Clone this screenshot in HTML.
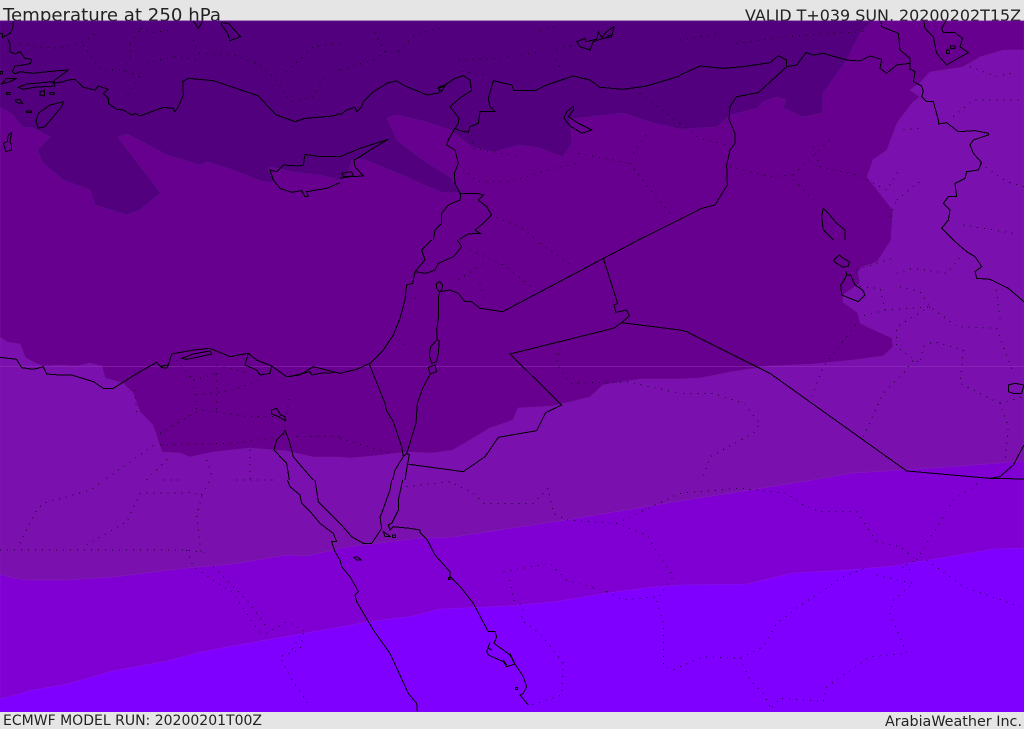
<!DOCTYPE html>
<html>
<head>
<meta charset="utf-8">
<title>Temperature at 250 hPa</title>
<style>
html,body{margin:0;padding:0;width:1024px;height:729px;overflow:hidden;background:#e5e5e5}
svg{display:block;position:absolute;left:0;top:0}
text{font-family:"DejaVu Sans",sans-serif;fill:#222}
.c path{fill:none;stroke:#000;stroke-width:1;vector-effect:non-scaling-stroke;shape-rendering:crispEdges}
.d path{fill:none;stroke:#000;stroke-width:1;stroke-dasharray:1 6;vector-effect:non-scaling-stroke;shape-rendering:crispEdges;stroke-opacity:.75}
</style>
</head>
<body>
<svg width="1024" height="729" viewBox="0 0 1024 729" xmlns="http://www.w3.org/2000/svg">
<rect width="1024" height="729" fill="#e5e5e5"/>
<text x="3" y="21" font-size="18" textLength="218" lengthAdjust="spacingAndGlyphs">Temperature at 250 hPa</text>
<text x="745" y="21" font-size="16" textLength="276" lengthAdjust="spacingAndGlyphs">VALID T+039 SUN, 20200202T15Z</text>

<rect x="0" y="21" width="1024" height="691" fill="#8000ff"/>

<!-- level 4 -->
<path fill="#8000d4" stroke="#8a14e0" stroke-width=".6" d="M0,21H1024V548L993,549 947,557 893,566 847,570 793,573 747,584 680,585 653,587 607,593 553,602 507,606 440,609 413,616 367,622 340,627 227,647 197,653 167,661 113,671 67,684 33,690 0,699Z"/>
<!-- level 3 -->
<path fill="#7a10ad" stroke="#8520b8" stroke-width=".6" d="M0,21H1024V461L1013,462 947,467 853,473 813,480 680,501 553,522 453,537 420,538 340,548 333,550 307,556 287,555 233,564 187,568 113,577 67,580 27,580 13,578 0,574Z"/>
<!-- level 2 -->
<path fill="#67008f" stroke="#731a9c" stroke-width=".6" d="M0,21H1024V50L1003,50 980,57 963,67 930,72 920,83 910,90 920,97 913,102 897,123 887,150 873,160 867,177 893,210 891,240 888,245 877,262 862,267 858,272 860,283 843,295 843,302 858,313 860,323 870,328 892,338 893,347 883,356 853,360 813,364 770,366 730,372 700,378 680,379 640,379 603,385 590,397 553,406 518,408 513,420 490,428 470,440 453,450 433,453 407,452 373,456 350,458 340,457 313,457 287,451 250,448 213,452 190,457 180,453 162,452 158,440 153,425 140,412 133,393 123,383 105,378 102,366 90,363 77,366 60,365 43,366 33,362 25,357 20,344 7,342 0,337Z"/>
<!-- level 1 -->
<path fill="#52007e" stroke="#5f108c" stroke-width=".6" d="M0,21H873L860,33 847,60 823,93 822,113 803,117 783,108 786,100 777,97 763,102 758,108 730,115 717,127 680,129 650,122 623,113 570,119 572,143 563,157 540,148 520,145 493,152 472,147 450,130 427,122 397,115 387,118 397,140 423,160 450,177 463,193 440,192 407,177 363,159 352,160 346,178 340,180 320,175 293,172 270,167 268,170 277,182 263,182 233,170 207,162 200,165 167,155 127,134 118,137 143,170 161,193 140,210 127,215 95,205 90,190 63,180 43,163 37,150 50,137 33,128 22,127 13,115 0,107Z"/>

<rect x="0" y="366" width="1024" height="1" fill="#a040c8" fill-opacity=".4"/>

<!-- zoom tile 1 -->
<g transform="scale(.33333)">
<g class="d">
<path d="M420,85 460,98 520,90M390,130 420,90M60,130 110,140 180,145 250,125 290,100M250,135 300,210 370,210 420,230M440,190 520,170 600,180M390,130 392,170 370,215M420,230 380,290M620,160 700,165 780,195 830,240 860,290M1020,130 940,140 860,215M860,290 880,305 940,290 980,220M580,120 600,165"/>
</g>
<g class="c">
<path d="M40,63 38,85 30,100 8,112 8,100 0,100M22,115 30,130 30,155 45,162 60,155 75,175 95,178 92,190 70,195 45,198 37,215 45,222 60,215 100,220 160,213 205,210 165,240 160,250 190,245 205,240 225,238 250,262 285,270 295,258 325,268 310,280 325,295 325,310 350,328 370,330 395,345 405,340 420,348 490,322 520,325 525,335 535,320 550,285 548,245 565,235 640,242 700,262 775,288 800,315 830,345 885,365 915,355 1000,348 1020,340"/>
<path d="M190,305 150,315 115,340 108,365 115,385 135,380 160,350 185,320Z"/>
<path d="M35,398 25,405 22,425 10,430 18,455 35,450 35,435 30,425Z"/>
<path d="M20,235 50,235 30,245 5,252ZM55,262 80,252 160,245 165,258 100,262 70,268ZM120,275 133,272 133,288 120,285ZM20,278 30,278 30,284 20,284ZM45,300 60,298 68,310 50,308ZM80,333 95,333 95,337 80,337ZM0,215 8,215 8,222 0,222ZM150,278 162,278 162,283 150,283Z"/>
<path d="M580,63 595,85 608,65M665,68 685,70 722,110 690,122 683,100 665,75Z"/>
<path d="M1020,470 960,470 915,463 910,495 895,498 850,495 830,515 810,510 820,540 840,565 875,577 905,572 915,590 925,590 920,575 980,565 1020,548"/>
</g>
</g>

<!-- zoom tile 2 -->
<g transform="translate(340,0) scale(.33333)">
<g class="d">
<path d="M0,210 100,180 135,155 100,90M175,155 230,100 300,85M355,180 480,175 600,155M600,90 650,80M645,180 665,210M650,150 700,135M365,215 440,225M460,320 480,340M395,405 400,440M400,445 540,470M385,520 410,545 510,545 640,505 715,490M715,460 870,490M880,460 920,400M870,490 930,570 1000,650M450,645 540,680 590,720M900,280 980,340 1020,370"/>
</g>
<g class="c">
<path d="M0,345 20,330 45,322 50,335 65,320 70,305 100,275 145,248 170,243 195,258 262,285 300,278 295,262 315,255 345,235 370,227 390,240 395,272 365,290 330,320 357,355 355,370 345,385 325,420 320,435 345,450 355,490 343,520 345,550 362,585 360,600 325,615 305,640 305,670 285,690 280,720"/>
<path d="M0,470 60,445 145,418 90,450 60,470 42,480 45,500 70,528 30,530 0,535M5,520 35,515 40,528 10,530Z"/>
<path d="M362,580 410,580 430,585 415,600 440,620 455,645 430,670 405,690 420,700 385,702 358,718"/>
<path d="M345,385 360,392 385,397 390,380 415,370 420,335 465,335 450,320 445,295 460,242 515,255 522,272 585,272 620,255 700,228 750,240 780,262 850,268 920,258 1020,228"/>
<path d="M710,125 735,115 738,125 770,118 775,95 785,112 800,95 822,80 815,110 790,115 760,125 750,150 720,140ZM800,108 815,105"/>
<path d="M700,320 680,335 672,355 690,378 715,393 725,400 755,390 735,380 715,370 685,350 700,330Z"/>
<path d="M295,265 315,258 305,275Z"/>
<path d="M1020,658 895,720"/>
</g>
</g>

<!-- zoom tile 3 -->
<g transform="translate(680,0) scale(.33333)">
<g class="d">
<path d="M0,120 120,100M170,130 320,110 440,100 550,95M0,370 60,415 140,435M150,500 270,530 340,525M340,525 460,410M400,440 420,500 550,530M340,540 400,600M560,540 620,570 660,505M650,600 720,545M630,650 650,600M870,200 950,230 1010,215M820,350 880,300 1020,300M670,388 720,385M850,675 1000,700M900,490 980,545 1032,560"/>
</g>
<g class="c">
<path d="M0,225 60,198 130,205 190,200 270,188 295,167 320,180 320,200 350,195 378,158 400,165 430,160 500,180 540,183 570,168 605,178 600,205 620,220 650,195 690,190 690,207 705,215 700,245 725,258 730,275 725,290 740,305 760,305 775,360 775,372 800,368 835,395 885,392 925,400 925,405 880,420 870,435 880,460 905,488 895,510 860,515 855,535 825,550 830,590 805,590 790,610 810,630 805,660 785,685 820,720"/>
<path d="M603,63 605,80 655,100 660,150 690,175 690,190M732,63 735,85 760,110 770,160 800,195 825,180 865,158 840,140 848,115 825,98 790,98 785,85 798,63"/>
<path d="M320,200 235,278 170,290 150,320 147,358 165,400 165,430 150,450 140,495 142,555 105,615 65,625 0,658"/>
<path d="M430,625 425,650 430,690 460,720M430,625 445,640 470,670 495,690 495,720"/>
<path d="M800,150 808,150 808,160 800,160ZM812,138 825,138 825,145 812,145Z"/>
</g>
</g>

<!-- zoom tile 4 -->
<g transform="translate(0,240) scale(.33333)">
<g class="d">
<path d="M580,420 650,400M580,420 590,510M650,400 650,520M590,465 700,450 790,415M405,450 410,520M530,360 580,420M650,375 750,400M480,580 600,510 750,530 850,530M890,590 1020,590M480,615 700,610 850,590 870,460M320,715 470,610M440,720 510,650M620,660 640,720M750,630 750,720"/>
</g>
<g class="c">
<path d="M0,352 50,358 65,383 100,388 130,380 140,402 180,405 215,405 280,425 310,445 340,445 420,395 470,367 482,380 505,375 515,342 580,330 630,325 690,350 745,340 770,360 815,378 860,410 900,405 940,380 1020,400"/>
<path d="M545,355 580,342 630,333 635,342 600,350 560,358Z"/>
<path d="M480,378 505,376 500,384 485,383Z"/>
<path d="M745,340 735,375 770,390 780,405 810,400 815,378M870,410 930,395 935,405 960,400 1000,398"/>
<path d="M815,510 830,505 842,525 855,530 855,542 835,530 815,522Z"/>
<path d="M855,570 850,580 830,600 822,630 860,670 868,720M855,570 870,610 880,650 905,680 940,720"/>
</g>
</g>

<!-- zoom tile 5 -->
<g transform="translate(340,240) scale(.33333)">
<g class="d">
<path d="M390,30 490,75 580,145M355,120 430,70M420,130 435,180M160,285 200,320M200,170 240,180M600,10 700,80M660,320 650,370 690,430 860,425 1020,460M0,595 150,640"/>
</g>
<g class="c">
<path d="M0,400 50,388 90,370 130,330 160,285 180,235 195,180 200,135 218,130 225,95 255,60 245,30 275,0"/>
<path d="M225,95 258,100 285,90 295,70 340,50 365,20 352,0"/>
<path d="M300,155 330,150 355,160 375,185 395,185 420,205 488,215 895,0"/>
<path d="M790,55 833,190 822,195 828,217 860,210 868,228 845,248 820,265 510,342 665,495 617,518 590,572 475,592 435,650 370,695 200,672"/>
<path d="M845,248 1020,270"/>
<path d="M300,155 295,170 295,235 290,270 292,300"/>
<path d="M290,300 298,302 295,340 290,365 275,370 268,345 272,320ZM265,382 285,375 290,395 270,402Z"/>
<path d="M272,400 250,440 232,490 228,550 205,625 200,640"/>
<path d="M290,130 300,125 308,135 305,150 298,155 290,145Z"/>
<path d="M88,372 135,490 140,512 160,545 185,620 190,650"/>
<path d="M190,650 200,640 208,645 203,670 195,720M190,650 165,690 158,720"/>
</g>
</g>

<!-- zoom tile 6 -->
<g transform="translate(680,240) scale(.33333)">
<g class="d">
<path d="M10,460 100,460 190,490 240,550 220,580 90,650 70,710M395,470 430,380 530,250M550,590 610,460 670,400 700,360M530,90 650,50M650,100 700,85 800,100 850,40M540,140 600,145 615,210 540,230M660,140 720,155 750,200 830,260 950,265 1000,400M615,210 750,200M750,200 650,260 650,320 720,370 730,320 760,305 850,330 840,430 960,490 985,560 975,670M960,490 1032,470M950,150 960,240"/>
</g>
<g class="c">
<path d="M462,60 478,45 490,55 508,65 505,78 490,82 462,65Z"/>
<path d="M498,95 500,105 490,125 482,135 485,165 510,175 535,185 555,165 548,150 525,135 512,105 498,105"/>
<path d="M820,0 860,35 885,50 905,80 885,95 890,115 930,118 985,145 1032,185"/>
<path d="M1032,615 1000,675 960,710"/>
<path d="M0,270 20,275 270,400 680,693 930,715 960,710M930,715 1032,717"/>
<path d="M985,435 1005,430 1032,435 1025,460 1000,460 985,455Z"/>
</g>
</g>

<!-- zoom tile 7 -->
<g transform="translate(0,480) scale(.33333)">
<g class="d">
<path d="M60,190 110,90 130,70 270,30 305,5M260,195 380,125 420,40 580,38 605,45 590,110 605,230M605,45 630,0M0,210 560,210 610,218M560,210 580,260 700,340 780,460M640,260 700,320 740,360 800,440M800,460 860,425 910,450 870,520M910,460 900,510 840,530 870,590 930,680M490,0 550,0M710,0 820,0"/>
</g>
<g class="c">
<path d="M862,0 870,20 900,45 905,70 935,100 960,130 1000,160 1010,185 995,185 1005,215 1020,240"/>
<path d="M945,0 955,65 985,95 1020,130"/>
</g>
</g>

<!-- zoom tile 8 -->
<g transform="translate(340,480) scale(.33333)">
<g class="d">
<path d="M200,20 330,5 400,40 430,70 580,70 625,25 640,100 680,120 830,130 920,165 960,230 1000,290 950,360 970,430 970,560 1010,570M490,275 630,250 680,300 800,335M510,300 520,360 550,380 545,420 600,460 670,550 665,645 575,675M800,335 850,360 950,350M830,130 1020,40"/>
</g>
<g class="c">
<path d="M155,0 150,30 125,100 120,110 125,145 95,190 70,190 35,170 0,130"/>
<path d="M188,0 175,60 175,90 155,130 145,135 150,150 160,140 210,145 240,150 240,158 262,180 285,225 330,275 330,290 365,325 400,370 445,455 465,455 470,470 462,490 490,510 510,525 520,545 550,590 560,620 550,640 540,645 565,675"/>
<path d="M130,155 145,165 150,170 135,170ZM157,165 167,165 167,172 157,172ZM42,232 52,230 63,240 50,240ZM325,292 330,292 330,298 325,298ZM526,622 533,622 533,628 526,628Z"/>
<path d="M0,240 5,260 30,290 50,325 55,335 45,345 50,365 100,450 150,520 205,640 230,670 232,695"/>
<path d="M450,487 440,515 445,525 490,545 500,560 525,552 510,520M490,540 500,555M445,505 455,510"/>
</g>
</g>

<!-- zoom tile 9 -->
<g transform="translate(680,480) scale(.33333)">
<g class="d">
<path d="M0,40 180,25 320,40 370,75 420,95 530,95 590,185 660,200 710,240M710,240 820,60 900,5M0,560 70,530 180,535 250,500 290,430 370,370 490,290 560,262M590,285 650,300 700,310 640,360 630,400 680,520 570,530 440,620 430,665 300,655 270,690M180,535 210,600 250,640 270,680M690,270 665,260 710,240M740,240 850,320 1020,380"/>
</g>
</g>

<rect x="0" y="712" width="1024" height="17" fill="#e5e5e5"/>
<text x="3" y="725" font-size="14" textLength="259" lengthAdjust="spacingAndGlyphs">ECMWF MODEL RUN: 20200201T00Z</text>
<text x="885" y="726" font-size="14.5" textLength="137" lengthAdjust="spacingAndGlyphs">ArabiaWeather Inc.</text>
</svg>
</body>
</html>
